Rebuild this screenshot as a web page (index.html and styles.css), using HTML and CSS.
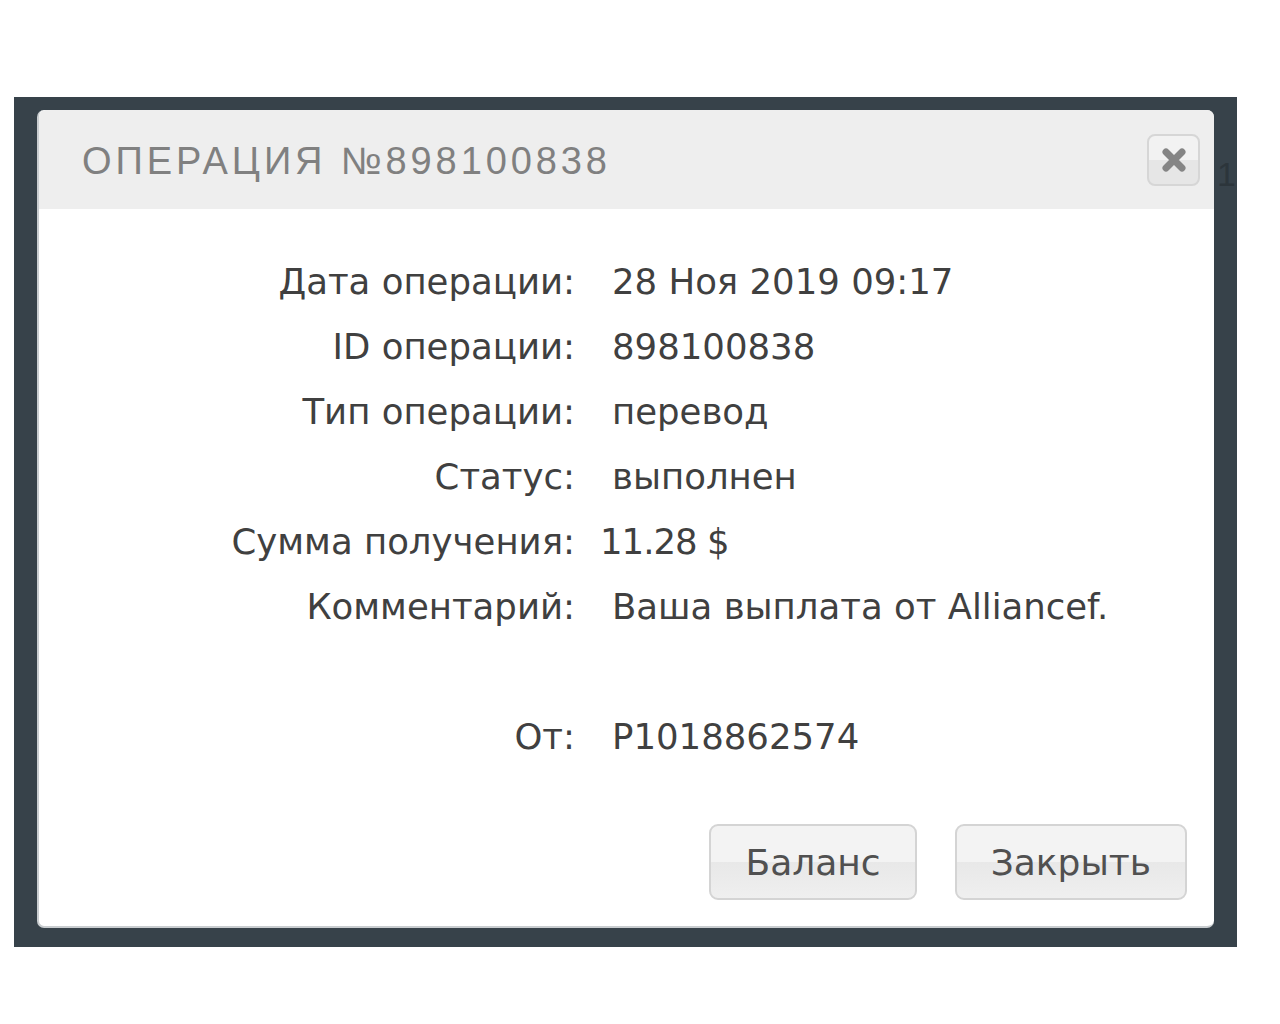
FILE: index.html
```html
<!DOCTYPE html>
<html>
  <head>
    <meta charset="utf-8">
    <title>Операция №898100838</title>
    <link rel="stylesheet" href="styles.css">
  </head>
  <body>
    <div class="overlay">
      <span class="behind">1</span>
      <div class="modal">
        <div class="modal-header">
          <h2 class="modal-title">Операция №898100838</h2>
          <button class="close" type="button" aria-label="Закрыть">
            <svg width="28" height="28" viewBox="0 0 28 28">
              <path d="M6 6 L22 22 M22 6 L6 22" stroke="#858585" stroke-width="7" stroke-linecap="round"/>
            </svg>
          </button>
        </div>
        <div class="modal-body">
          <div class="details">
            <div class="label">Дата операции:</div>
            <div class="value">28 Ноя 2019 09:17</div>
            <div class="label">ID операции:</div>
            <div class="value">898100838</div>
            <div class="label">Тип операции:</div>
            <div class="value">перевод</div>
            <div class="label">Статус:</div>
            <div class="value">выполнен</div>
            <div class="label">Сумма получения:</div>
            <div class="value amount">11.28 $</div>
            <div class="label">Комментарий:</div>
            <div class="value">Ваша выплата от Alliancef.</div>
            <div class="label"></div>
            <div class="value"></div>
            <div class="label">От:</div>
            <div class="value">P1018862574</div>
          </div>
        </div>
        <div class="modal-footer">
          <button class="btn" type="button">Баланс</button>
          <button class="btn" type="button">Закрыть</button>
        </div>
      </div>
    </div>
  </body>
</html>
```

FILE: styles.css
```css
body {
  margin: 0;
  background-color: #ffffff;
  font-family: "DejaVu Sans", sans-serif;
}

.overlay {
  position: relative;
  width: 1223px;
  height: 850px;
  margin: 97px 0 0 14px;
  padding: 13px 23px 0 23px;
  box-sizing: border-box;
  background-color: #37424a;
}

.behind {
  position: absolute;
  top: 58px;
  left: 1203px;
  font-family: "Liberation Sans", sans-serif;
  font-size: 34px;
  color: #2c353b;
}

.modal {
  width: 1177px;
  height: 818px;
  box-sizing: border-box;
  background-color: #ffffff;
  border-left: 2px solid #c9cdd0;
  border-bottom: 2px solid #c9cdd0;
  border-radius: 7px;
  display: flex;
  flex-direction: column;
}

.modal-header {
  height: 99px;
  background-color: #eeeeee;
  border-radius: 7px 7px 0 0;
  display: flex;
  align-items: center;
  justify-content: space-between;
  padding: 3px 14px 0 43px;
  box-sizing: border-box;
}

.modal-title {
  margin: 0;
  font-family: "Liberation Sans", sans-serif;
  font-weight: normal;
  font-size: 38px;
  letter-spacing: 3.9px;
  text-transform: uppercase;
  color: #808080;
}

.close {
  width: 53px;
  height: 52px;
  margin-top: -3px;
  padding: 0;
  border: 2px solid #d6d6d6;
  border-radius: 8px;
  background: linear-gradient(#f2f2f2 50%, #e6e6e6 50%);
  display: flex;
  align-items: center;
  justify-content: center;
  cursor: pointer;
}

.modal-body {
  flex: 1;
  padding-top: 40px;
}

.details {
  display: grid;
  grid-template-columns: 536px auto;
  column-gap: 37px;
  grid-auto-rows: 65px;
  align-items: center;
  font-size: 35.5px;
  color: #404040;
}

.label {
  text-align: right;
}

.amount {
  margin-left: -12px;
  letter-spacing: -1px;
}

.modal-footer {
  display: flex;
  justify-content: flex-end;
  gap: 38px;
  padding: 0 27px 26px 0;
}

.btn {
  height: 76px;
  padding: 0 34px;
  border: 2px solid #d4d4d4;
  border-radius: 9px;
  background: linear-gradient(#f3f3f3 50%, #e8e8e8 50%, #efefef);
  font-family: "DejaVu Sans", sans-serif;
  font-size: 36px;
  color: #505050;
  cursor: pointer;
}
```
